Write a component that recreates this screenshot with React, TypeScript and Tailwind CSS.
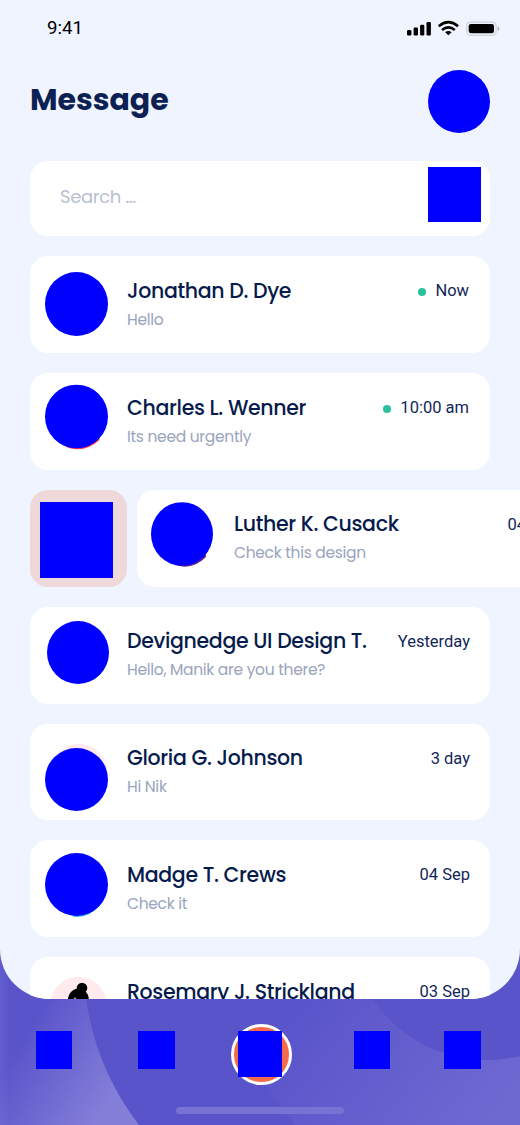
import type { ReactNode } from "react";

type Chat = {
  name: string;
  text?: string;
  time: string;
  online?: boolean;
  swiped?: boolean;
  avatar: ReactNode;
};

const BLUE = "#0000ff";

const chats: Chat[] = [
  {
    name: "Jonathan D. Dye", text: "Hello", time: "Now", online: true,
    avatar: <ellipse cx="46.5" cy="48" rx="31.5" ry="32" fill={BLUE} />,
  },
  {
    name: "Charles L. Wenner", text: "Its need urgently", time: "10:00 am", online: true,
    avatar: (
      <>
        <path d="M36 74 Q54 81 69.5 67 L69 61 L40 68Z" fill="#ff3048" />
        <ellipse cx="46.5" cy="43.5" rx="31.5" ry="31.8" fill={BLUE} />
      </>
    ),
  },
  {
    name: "Luther K. Cusack", text: "Check this design", time: "04 Sep", swiped: true,
    avatar: (
      <>
        <path d="M40 75.5 Q56 80 69 67 L68 60 L40 68Z" fill="#62208f" />
        <ellipse cx="45" cy="44" rx="31" ry="31.8" fill={BLUE} />
      </>
    ),
  },
  {
    name: "Devignedge UI Design T.", text: "Hello, Manik are you there?", time: "Yesterday",
    avatar: <ellipse cx="48" cy="45.5" rx="31" ry="31.5" fill={BLUE} />,
  },
  {
    name: "Gloria G. Johnson", text: "Hi Nik", time: "3 day",
    avatar: (
      <>
        <circle cx="48.8" cy="48.3" r="28.5" fill="#ffebed" />
        <circle cx="46.5" cy="55.5" r="31.5" fill={BLUE} />
      </>
    ),
  },
  {
    name: "Madge T. Crews", text: "Check it", time: "04 Sep",
    avatar: (
      <>
        <path d="M43 76.5 Q58 79 70 65 L68 60 L40 68Z" fill="#18b5e8" />
        <circle cx="46.5" cy="44.5" r="31.5" fill={BLUE} />
      </>
    ),
  },
  {
    name: "Rosemary J. Strickland", time: "03 Sep",
    avatar: (
      <>
        <circle cx="48.5" cy="48" r="28.3" fill="#ffebed" />
        <path d="M38 46 C37 37 42 32 49 31 C56 33 60 38 58.5 46Z" fill="#000" />
        <circle cx="52" cy="31" r="5.3" fill="#000" />
        <path d="M43 43 L45 40 L47 43Z" fill="#f39b80" />
      </>
    ),
  },
];

function ChatCard({ chat }: { chat: Chat }) {
  return (
    <article
      className={
        "flex h-full shrink-0 rounded-[18px] bg-white " + (chat.swiped ? "w-[441px]" : "w-[460px]")
      }
    >
      <svg className="h-[97px] w-[97px] shrink-0" viewBox="0 0 97 97">{chat.avatar}</svg>
      <div className="grow pt-[20.5px] whitespace-nowrap">
        <h2 className="text-[20.5px] leading-[28px] font-medium tracking-[-0.34px] text-[#061b4c]">{chat.name}</h2>
        {chat.text && (
          <p className="mt-[3px] text-[15.5px] leading-[24px] tracking-[-0.3px] text-[#9aa4bd]">{chat.text}</p>
        )}
      </div>
      <div
        className={
          "mt-[21.5px] flex h-[28px] items-center font-['Roboto',sans-serif] text-[16.5px] whitespace-nowrap text-[#12265a] " +
          (chat.online ? "pr-[21px]" : "pr-[20px]")
        }
      >
        {chat.online && <span className="mr-[9px] size-[8px] rounded-full bg-[#2bc09c]" />}
        {chat.time}
      </div>
    </article>
  );
}

function StatusBar() {
  return (
    <header className="flex h-[56px] shrink-0 items-center justify-between pr-[20px] pl-[47px]">
      <time className="font-['Roboto',sans-serif] text-[18.7px] text-black">9:41</time>
      <svg className="h-[18px] w-[94px]" viewBox="0 0 94 18">
        <rect x="1" y="11" width="4.4" height="5.4" rx="1.2" />
        <rect x="7.6" y="8.6" width="4.4" height="7.8" rx="1.2" />
        <rect x="14.1" y="5.7" width="4.2" height="10.7" rx="1.2" />
        <rect x="20.5" y="3" width="4.4" height="13.4" rx="1.2" />
        <g fill="none" stroke="#000" strokeWidth="2.6">
          <path d="M32.7 7.2 Q42.4 -0.8 52.1 7.2" />
          <path d="M36 11 Q42.4 5.6 48.8 11" />
        </g>
        <path d="M39.2 13.3 Q42.4 10.5 45.6 13.3 L42.4 16.2Z" />
        <rect x="60.7" y="3.1" width="29.4" height="13.2" rx="3.8" fill="none" stroke="#cfcfdc" strokeWidth="1.2" />
        <rect x="62.7" y="5" width="25.3" height="9.3" rx="2.2" />
        <path d="M91.7 7.3 Q95 9.7 91.7 12.1Z" fill="#aaaab5" />
      </svg>
    </header>
  );
}

function BottomBackdrop() {
  return (
    <svg className="absolute bottom-0 left-0 h-[185px] w-[520px]" viewBox="0 940 520 185">
      <defs>
        <linearGradient id="left" gradientUnits="userSpaceOnUse" x1="22" y1="1040" x2="112" y2="1096">
          <stop offset="0" stopColor="#fff" stopOpacity="0" />
          <stop offset="1" stopColor="#fff" stopOpacity="0.25" />
        </linearGradient>
        <linearGradient id="edge" x1="0" x2="1">
          <stop offset="0" stopColor="#fff" stopOpacity="0.05" />
          <stop offset="1" stopColor="#fff" stopOpacity="0" />
        </linearGradient>
        <linearGradient id="right" gradientUnits="userSpaceOnUse" x1="300" y1="1000" x2="490" y2="1145">
          <stop offset="0" stopColor="#fff" stopOpacity="0" />
          <stop offset="1" stopColor="#fff" stopOpacity="0.13" />
        </linearGradient>
      </defs>
      <rect y="940" width="520" height="185" fill="#5a54cb" />
      <rect y="940" width="10" height="185" fill="url(#edge)" />
      <path d="M0 940H80Q84 975 86 999Q96 1069 139 1125H0Z" fill="url(#left)" />
      <path d="M240 940H520V1125H295Q260 1085 240 1030Z" fill="url(#right)" />
      <circle cx="487" cy="922" r="138" fill="#5a54cb" />
    </svg>
  );
}

export default function App() {
  return (
    <main className="relative flex h-[1125px] w-[520px] flex-col overflow-hidden bg-[#5a54cb] font-['Poppins','Inter',sans-serif]">
      <BottomBackdrop />
      <section className="relative flex h-[999.4px] shrink-0 flex-col overflow-hidden rounded-b-[50px] bg-[#eff4fe]">
        <StatusBar />
        <div className="flex h-[105px] shrink-0 justify-between px-[30px] pt-[14px]">
          <h1 className="pt-[9px] text-[30px] leading-[42px] font-bold text-[#0b2153]">Message</h1>
          <div className="h-[63px] w-[62px] rounded-[50%] bg-[#0000ff]" />
        </div>
        <div className="mx-[30px] flex h-[75px] shrink-0 justify-between rounded-[18px] bg-white pr-[9px] pl-[30px]">
          <span className="pt-[24px] text-[18px] leading-[24px] tracking-[-0.35px] text-[#b8c0d1]">Search ...</span>
          <span className="mt-[6px] h-[55px] w-[53px] bg-[#0000ff]" />
        </div>
        <div className="mt-[20.2px] ml-[30px] flex flex-col gap-[20px]">
          {chats.map((chat) => (
            <div key={chat.name} className="flex h-[96.83px] shrink-0 gap-[10px]">
              {chat.swiped && (
                <div className="w-[97px] shrink-0 rounded-[18px] bg-[#efd8da] pt-[12px] pl-[10px]">
                  <div className="h-[76px] w-[73px] bg-[#0000ff]" />
                </div>
              )}
              <ChatCard chat={chat} />
            </div>
          ))}
        </div>
      </section>
      <nav className="relative flex h-[126px] shrink-0 pl-[36px]">
        <span className="mt-[32px] h-[38px] w-[36px] bg-[#0000ff]" />
        <span className="mt-[32px] ml-[66px] h-[38px] w-[37px] bg-[#0000ff]" />
        <span className="mt-[25px] ml-[56px] size-[61px] rounded-full border-[3px] border-white bg-[#f5694d] pt-[4px] pl-[4px]">
          <span className="block h-[46px] w-[44px] bg-[#0000ff]" />
        </span>
        <span className="mt-[32px] ml-[62px] h-[38px] w-[36px] bg-[#0000ff]" />
        <span className="mt-[32px] ml-[54px] h-[38px] w-[37px] bg-[#0000ff]" />
        <span className="absolute top-[108px] left-[176px] h-[7px] w-[168px] rounded-full bg-[#7772d3]" />
      </nav>
    </main>
  );
}
